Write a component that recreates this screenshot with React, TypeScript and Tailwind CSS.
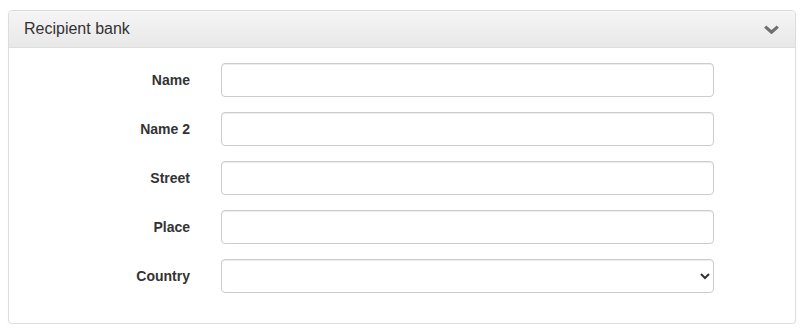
const fields = ['Name', 'Name 2', 'Street', 'Place'];

function ChevronDown() {
  return (
    <svg width="15" height="9" viewBox="0 0 15 9" className="block">
      <path d="M1.2 1.6 L7.5 7.2 L13.8 1.6" fill="none" stroke="#6f6f6f" strokeWidth="3.2" />
    </svg>
  );
}

export default function App() {
  return (
    <div className="pt-[10px] pl-[8px] pr-[6px] text-[14px] text-[#333] font-['Liberation_Sans',Arial,sans-serif]">
      <div className="rounded-[4px] border border-[#ddd] bg-white shadow-[0_1px_2px_rgba(0,0,0,0.05)]">
        <div className="flex h-[37px] items-center justify-between rounded-t-[3px] border-b border-[#ddd] bg-[linear-gradient(to_bottom,#f5f5f5_0%,#e8e8e8_100%)] px-[15px]">
          <h3 className="text-[16px] leading-[16px]">Recipient bank</h3>
          <span className="mr-[1px]">
            <ChevronDown />
          </span>
        </div>

        <div className="px-[15px] pt-[15px] pb-[15px]">
          {fields.map((label) => (
            <div key={label} className="mb-[15px] flex">
              <label className="w-[182px] shrink-0 pr-[16px] pt-[7px] text-right font-bold leading-[20px]">
                {label}
              </label>
              <div className="ml-[15px] w-[493px]">
                <input
                  type="text"
                  className="block h-[34px] w-full rounded-[4px] border border-[#ccc] bg-white px-[12px] py-[6px] shadow-[inset_0_1px_1px_rgba(0,0,0,0.075)] outline-none"
                />
              </div>
            </div>
          ))}
          <div className="mb-[15px] flex">
            <label className="w-[182px] shrink-0 pr-[16px] pt-[7px] text-right font-bold leading-[20px]">
              Country
            </label>
            <div className="ml-[15px] w-[493px]">
              <select className="block h-[34px] w-full rounded-[4px] border border-[#ccc] bg-white px-[12px] py-[6px] shadow-[inset_0_1px_1px_rgba(0,0,0,0.075)] outline-none">
                <option value=""></option>
              </select>
            </div>
          </div>
        </div>
      </div>
    </div>
  );
}
